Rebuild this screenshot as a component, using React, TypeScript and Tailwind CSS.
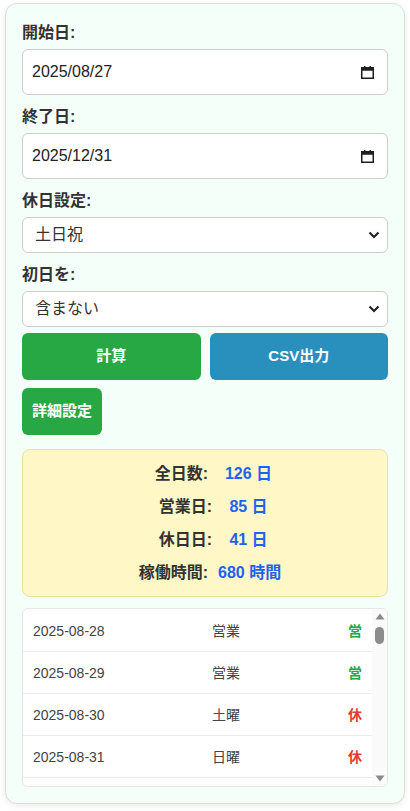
const FONT = "font-['Liberation_Sans','Noto_Sans_CJK_JP',sans-serif]"

interface DayRow {
  date: string
  kind: string
  status: "営" | "休"
}

const rows: DayRow[] = [
  { date: "2025-08-28", kind: "営業", status: "営" },
  { date: "2025-08-29", kind: "営業", status: "営" },
  { date: "2025-08-30", kind: "土曜", status: "休" },
  { date: "2025-08-31", kind: "日曜", status: "休" },
]

function CalendarIcon() {
  return (
    <svg width="13" height="13" viewBox="0 0 13 13" className="shrink-0">
      <rect x="3" y="0" width="1.5" height="2" fill="#1f1f1f" />
      <rect x="8.5" y="0" width="1.5" height="2" fill="#1f1f1f" />
      <rect x="0.75" y="1.75" width="11.5" height="10.5" fill="none" stroke="#1f1f1f" strokeWidth="1.5" />
      <rect x="0.75" y="1.75" width="11.5" height="3" fill="#1f1f1f" />
    </svg>
  )
}

function DateField({ label, value }: { label: string; value: string }) {
  return (
    <div className="flex flex-col">
      <label className="block text-base leading-6 font-bold text-[#333] mb-1">{label}</label>
      <div className="flex items-center justify-between h-[46px] rounded-md border border-[#cccccc] bg-white pl-[9px] pr-[13px] text-base text-[#222]">
        <span>{value}</span>
        <CalendarIcon />
      </div>
    </div>
  )
}

function SelectField({ label, value, options }: { label: string; value: string; options: string[] }) {
  return (
    <div className="flex flex-col">
      <label className="block text-base leading-6 font-bold text-[#333] mb-1">{label}</label>
      <div className="flex items-center justify-between h-[36px] rounded-md border border-[#cccccc] bg-white pl-3 pr-[7px] text-base text-[#333]">
        <span>{value}</span>
        <svg width="12" height="8" viewBox="0 0 12 8">
          <path d="M1.5 1.5 L6 6 L10.5 1.5" fill="none" stroke="#222" strokeWidth="2.2" />
        </svg>
        <select className="hidden" defaultValue={value}>
          {options.map((o) => (
            <option key={o}>{o}</option>
          ))}
        </select>
      </div>
    </div>
  )
}

function SummaryRow({ label, value, shift }: { label: string; value: string; shift?: boolean }) {
  return (
    <div className="flex items-center h-[33px] text-base font-bold whitespace-nowrap">
      <span className={`w-[189px] shrink-0 text-right text-[#333] ${shift ? "pr-0" : "pr-1"}`}>{label}</span>
      <span className="ml-[6px] min-w-[61px] text-center text-[#1e63f0]">{value}</span>
    </div>
  )
}

export default function App() {
  return (
    <div className={`${FONT} px-[5px] pt-[3px] pb-2`}>
      <div className="rounded-xl border border-[#d9dedb] bg-[#f5fffa] px-4 pt-[17px] pb-4 shadow-[0_2px_6px_rgba(0,0,0,0.08)]">
        <div className="flex flex-col gap-[10px]">
          <DateField label="開始日:" value="2025/08/27" />
          <DateField label="終了日:" value="2025/12/31" />
          <SelectField label="休日設定:" value="土日祝" options={["土日祝", "土日", "日のみ"]} />
          <SelectField label="初日を:" value="含まない" options={["含まない", "含む"]} />
        </div>

        <div className="mt-[6px] grid grid-cols-2 gap-[9px]">
          <button className="h-[47px] rounded-md bg-[#28a745] text-[15px] font-bold text-white">計算</button>
          <button className="h-[47px] rounded-md bg-[#2990bd] text-[15px] font-bold text-white">CSV出力</button>
        </div>
        <div className="mt-2">
          <button className="h-[47px] rounded-md bg-[#28a745] px-[10px] text-[15px] font-bold text-white">詳細設定</button>
        </div>

        <div className="mt-[14px] rounded-lg border border-[#ece2a0] bg-[#fff8c6] py-[7px]">
          <SummaryRow label="全日数:" value="126 日" />
          <SummaryRow label="営業日:" value="85 日" shift />
          <SummaryRow label="休日日:" value="41 日" shift />
          <SummaryRow label="稼働時間:" value="680 時間" />
        </div>

        <div className="mt-[11px] flex h-[179px] overflow-hidden rounded-md border border-[#e6e6e6] bg-white">
          <div className="flex-1 overflow-hidden pt-px">
            {rows.map((r) => (
              <div key={r.date} className="flex h-[42px] items-center border-b border-[#ececec] text-sm">
                <span className="w-[189px] pl-[10px] text-[#444]">{r.date}</span>
                <span className="flex-1 text-[#444]">{r.kind}</span>
                <span className={`pr-[10px] font-bold ${r.status === "営" ? "text-[#28a745]" : "text-[#e53935]"}`}>
                  {r.status}
                </span>
              </div>
            ))}
          </div>
          <div className="flex w-[15px] flex-col items-center bg-[#fafafa] py-[4px]">
            <svg width="10" height="7" viewBox="0 0 10 7">
              <path d="M5 0.5 L9.5 6.5 L0.5 6.5 Z" fill="#8a8a8a" />
            </svg>
            <div className="mt-[7px] h-[17px] w-[9px] rounded-full bg-[#8c8c8c]" />
            <div className="flex-1" />
            <svg width="10" height="7" viewBox="0 0 10 7">
              <path d="M0.5 0.5 L9.5 0.5 L5 6.5 Z" fill="#8a8a8a" />
            </svg>
          </div>
        </div>
      </div>
    </div>
  )
}
